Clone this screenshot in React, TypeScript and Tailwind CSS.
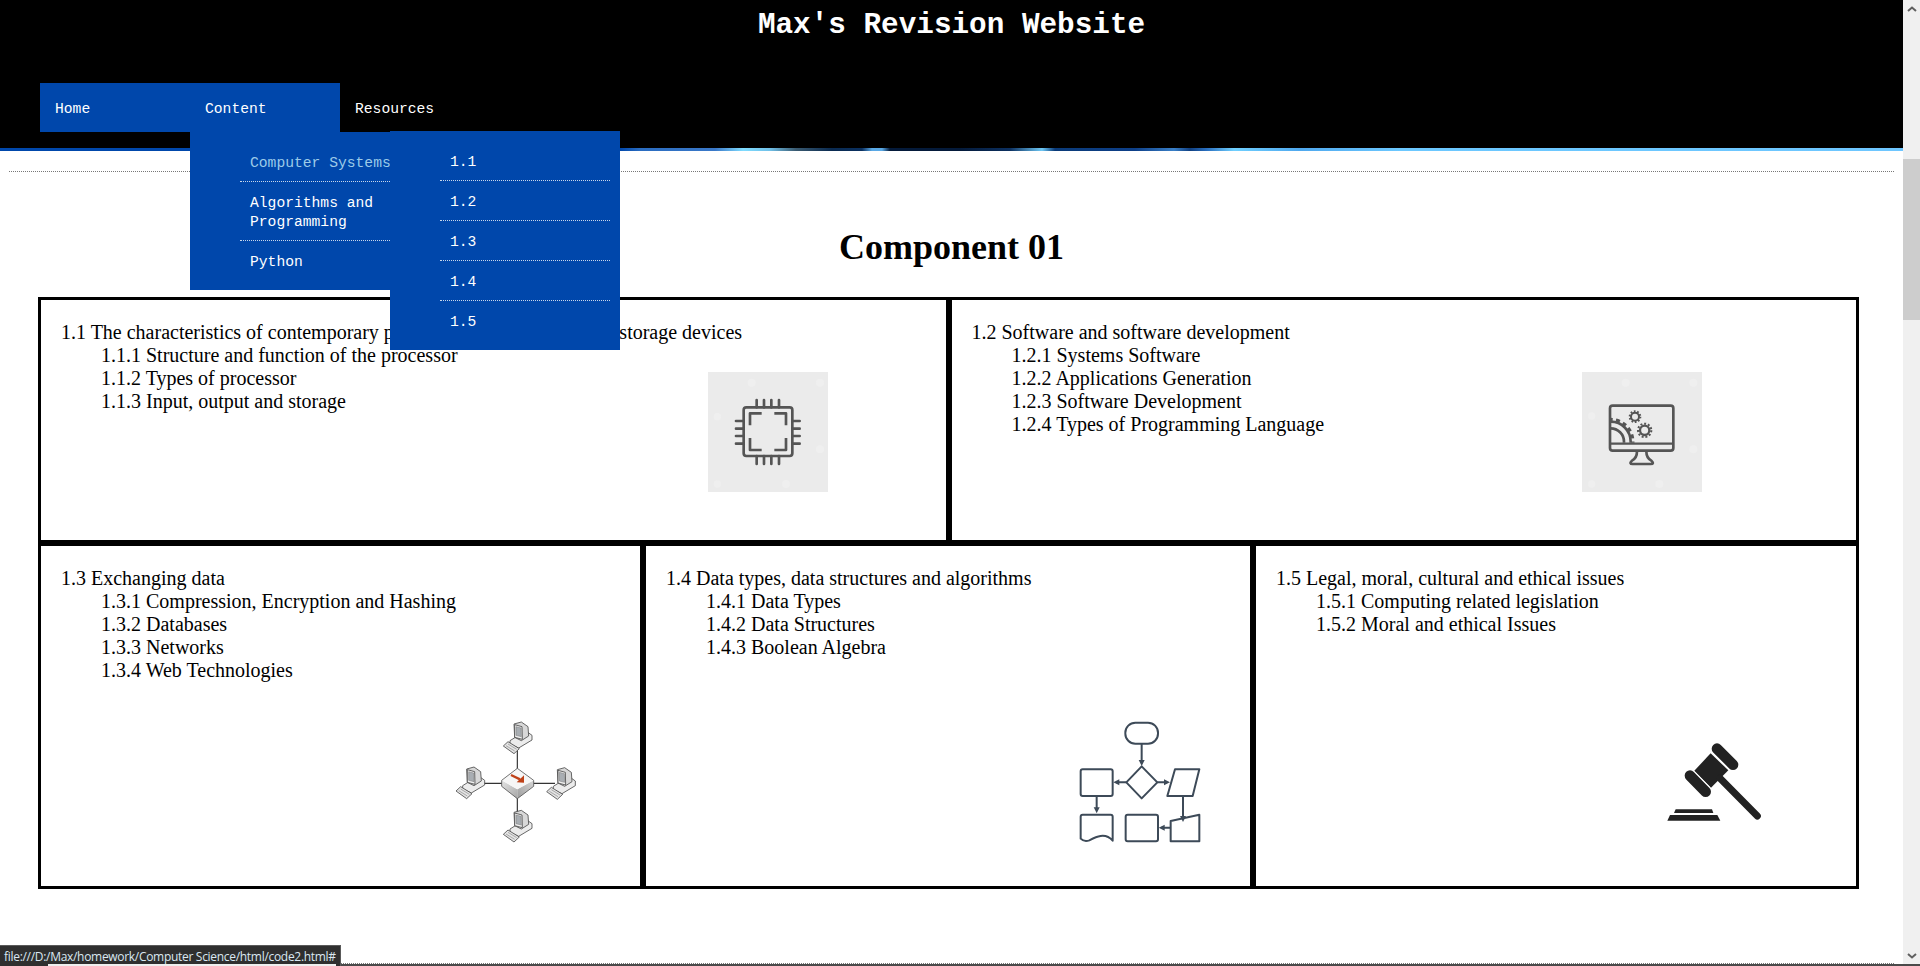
import React from "react";

const mono = "font-['Liberation_Mono',monospace] text-[14.67px] leading-[19px]";

function Chip() {
  return (
    <svg viewBox="0 0 540 450" className="col-start-1 row-start-1 justify-self-end self-start w-[180px] h-[150px] mt-[50px] mr-[86px]">
      <rect x="84" y="66" width="360" height="360" fill="#ebebeb" />
      <g fill="#efefef">
        <circle cx="215" cy="98" r="12" /><circle cx="420" cy="98" r="12" /><circle cx="112" cy="200" r="11" /><circle cx="420" cy="298" r="12" /><circle cx="112" cy="402" r="11" /><circle cx="318" cy="402" r="12" />
      </g>
      <g fill="none" stroke="#555" strokeWidth="8" strokeLinecap="round" strokeLinejoin="round">
        <rect x="191" y="172" width="146" height="146" rx="8" />
        <path d="M245 190H210V226M283 190H318V226M210 264V300H245M318 264V300H283" strokeLinecap="butt" />
        <path d="M230 150V172M252 150V172M274 150V172M297 150V172M230 318V342M252 318V342M274 318V342M297 318V342M168 213H191M168 236H191M168 258H191M168 281H191M337 213H359M337 236H359M337 258H359M337 281H359" />
      </g>
    </svg>
  );
}

function Monitor() {
  return (
    <svg viewBox="0 0 540 450" className="col-start-1 row-start-1 justify-self-end self-start w-[180px] h-[150px] mt-[50px] mr-[116px]">
      <defs>
        <clipPath id="scr"><rect x="150" y="170" width="190" height="108" /></clipPath>
      </defs>
      <rect x="66" y="66" width="360" height="360" fill="#ebebeb" />
      <g fill="#efefef">
        <circle cx="197" cy="98" r="12" /><circle cx="400" cy="98" r="12" /><circle cx="95" cy="198" r="11" /><circle cx="400" cy="298" r="12" /><circle cx="95" cy="402" r="11" /><circle cx="298" cy="402" r="12" />
      </g>
      <g fill="none" stroke="#555" strokeLinejoin="round">
        <rect x="150" y="167" width="190" height="135" rx="8" strokeWidth="8" />
        <path d="M150 281H340" strokeWidth="7" />
        <path d="M231 304C231 318 226 327 216 332Q206 342 218 342H272Q284 342 274 332C264 327 259 318 259 304" strokeWidth="8" />
        <g clipPath="url(#scr)">
          <circle cx="152" cy="275" r="40" strokeWidth="8" />
          <circle cx="152" cy="275" r="60" strokeWidth="8" />
          <circle cx="152" cy="275" r="67" strokeWidth="9" strokeDasharray="12 10" />
        </g>
        <circle cx="225" cy="200" r="12" strokeWidth="6" />
        <circle cx="225" cy="200" r="16" strokeWidth="6" strokeDasharray="5 5" />
        <circle cx="254" cy="241" r="14" strokeWidth="7" />
        <circle cx="254" cy="241" r="20" strokeWidth="6" strokeDasharray="6 5.5" />
      </g>
    </svg>
  );
}

function Pc({ x, y }: { x: number; y: number }) {
  return (
    <g transform={`translate(${x} ${y})`} stroke="#4a4a4a" strokeWidth="2.5" strokeLinejoin="round">
      <polygon points="210,122 226,112 262,96 276,106 276,120 236,144 210,132" fill="#ececec" />
      <polygon points="222,72 244,66 264,80 266,108 244,122 224,112" fill="#d8d8d8" />
      <polygon points="224,74 246,80 247,118 224,112" fill="#efefef" />
      <polygon points="228,80 243,84 244,110 228,106" fill="#a9aeb3" stroke="#777" strokeWidth="1.5" />
      <polygon points="190,138 204,125 238,146 222,161" fill="#e4e4e4" />
      <path d="M198 137L224 153M204 132L230 148" stroke="#8a8a8a" strokeWidth="2" />
    </g>
  );
}

function Network() {
  return (
    <svg viewBox="0 0 480 480" className="col-start-1 row-start-1 justify-self-end self-start w-[160px] h-[160px] mt-[154px] mr-[40px]">
      <defs>
        <linearGradient id="swl" x1="0" y1="0" x2="1" y2="1">
          <stop offset="0" stopColor="#e4e4e4" />
          <stop offset="1" stopColor="#a8a8a8" />
        </linearGradient>
        <linearGradient id="swr" x1="1" y1="0" x2="0" y2="1">
          <stop offset="0" stopColor="#d6d6d6" />
          <stop offset="1" stopColor="#9c9c9c" />
        </linearGradient>
      </defs>
      <path d="M232 150V210M132 250H186M280 250H345M232 294V338" stroke="#333" strokeWidth="3.5" />
      <Pc x={0} y={0} />
      <Pc x={-142} y={135} />
      <Pc x={130} y={137} />
      <Pc x={0} y={265} />
      <polygon points="185,241 232,268 232,296 185,259" fill="url(#swl)" />
      <polygon points="281,241 232,268 232,296 281,259" fill="url(#swr)" />
      <polygon points="232,205 281,241 232,268 185,241" fill="#f6f6f6" />
      <polygon points="232,205 281,241 281,259 232,296 185,259 185,241" fill="none" stroke="#555" strokeWidth="2.5" strokeLinejoin="round" />
      <path d="M213 225L240 238" stroke="#bf4118" strokeWidth="7" />
      <polygon points="252,226 252,248 230,247" fill="#bf4118" />
    </svg>
  );
}

function Flow() {
  return (
    <svg viewBox="0 0 480 480" className="col-start-1 row-start-1 justify-self-end self-start w-[160px] h-[160px] mt-[154px] mr-[30px]">
      <g fill="none" stroke="#3d4a58" strokeWidth="6" strokeLinejoin="round">
        <rect x="196" y="68" width="98" height="63" rx="30" />
        <polygon points="245,199 292,247 245,295 199,247" />
        <rect x="62" y="208" width="96" height="80" rx="6" />
        <polygon points="345,208 418,208 398,288 322,288" />
        <polygon points="332,363 418,344 418,424 332,424" />
        <rect x="197" y="344" width="97" height="80" rx="6" />
        <path d="M62 350Q62 344 68 344H152Q158 344 158 350V422C135 395 105 412 88 421C76 426 68 422 62 416Z" />
        <path d="M245 131V190M199 247H168M292 247H320M110 288V330M369 288V358M332 383H304" />
      </g>
      <g fill="#3d4a58">
        <polygon points="236,180 254,180 245,198" />
        <polygon points="178,238 178,256 160,247" />
        <polygon points="312,238 312,256 330,247" />
        <polygon points="101,322 119,322 110,340" />
        <polygon points="360,348 378,348 369,366" />
        <polygon points="314,374 314,392 296,383" />
      </g>
    </svg>
  );
}

function Gavel() {
  return (
    <svg viewBox="0 0 480 360" className="col-start-1 row-start-1 justify-self-end self-start w-[160px] h-[120px] mt-[174px] mr-[56px]">
      <g fill="#222">
        <polygon points="107,268 216,268 220,279 102,279" />
        <polygon points="90,285 232,285 241,302 82,302" />
        <polygon points="212,100 265,151 213,203 163,152" />
      </g>
      <g stroke="#222" strokeLinecap="round">
        <path d="M240 175L352 288" strokeWidth="21" />
        <path d="M231 86L279 134" strokeWidth="32" />
        <path d="M150 167L197 215" strokeWidth="32" />
      </g>
      <path d="M218 99L266 147M163 154L210 202" stroke="#fff" strokeWidth="2.5" />
    </svg>
  );
}

function Box({ title, items, children }: { title: string; items: string[]; children: React.ReactNode }) {
  return (
    <section className="border-[3px] border-black grid grid-cols-1 grid-rows-1 min-w-0">
      <div className="col-start-1 row-start-1 pt-[21px] pl-[20px]">
        <p className="whitespace-nowrap">{title}</p>
        <ul className="pl-[40px]">
          {items.map((t) => (
            <li key={t} className="whitespace-nowrap">{t}</li>
          ))}
        </ul>
      </div>
      {children}
    </section>
  );
}

function DropItem({ children, last, className = "" }: { children: React.ReactNode; last?: boolean; className?: string }) {
  return (
    <li className={`px-[10px] pt-[12px] pb-[8px] ${last ? "" : "border-b border-dotted border-[#c9d6ea]"} ${className}`}>{children}</li>
  );
}

export default function App() {
  return (
    <div className="relative flex h-[966px] overflow-hidden bg-white text-black font-['Liberation_Serif',serif] text-[20px] leading-[23px]">
      <main className="flex-1 min-w-0">
        <header className="h-[148px] bg-black text-white">
          <h1 className="h-[46px] pt-[3px] text-center font-['Liberation_Mono',monospace] text-[29.33px] leading-[46px] font-bold">Max's Revision Website</h1>
          <nav className={`mt-[37px] ml-[40px] ${mono}`}>
            <ul className="flex h-[49px]">
              <li className="w-[150px] bg-[#0047ab] pl-[15px] pt-[17px]">Home</li>
              <li className="relative z-20 w-[150px] bg-[#0047ab] pl-[15px] pt-[17px]">
                Content
                <div className="absolute left-0 top-[49px] w-[200px] h-[158px] bg-[#0047ab] pl-[50px] pt-[10px]">
                  <ul>
                    <DropItem className="text-[#9ccbe8] whitespace-nowrap">Computer Systems</DropItem>
                    <DropItem>Algorithms and Programming</DropItem>
                    <DropItem last>Python</DropItem>
                  </ul>
                  <div className="absolute left-[200px] top-[-1px] w-[230px] h-[219px] bg-[#0047ab] pl-[50px] pr-[10px] pt-[10px]">
                    <ul>
                      <DropItem>1.1</DropItem>
                      <DropItem>1.2</DropItem>
                      <DropItem>1.3</DropItem>
                      <DropItem>1.4</DropItem>
                      <DropItem last>1.5</DropItem>
                    </ul>
                  </div>
                </div>
              </li>
              <li className="w-[150px] pl-[15px] pt-[17px]">Resources</li>
            </ul>
          </nav>
        </header>
        <div className="h-[3px] bg-[linear-gradient(90deg,#0047ab_0,#0047ab_620px,#2a6cc0_640px,#3a78c8_715px,#7fdcff_743px,#70c0e8_770px,#3a5a70_796px,#0a2a50_832px,#0a3060_862px,#5aa9e6_872px,#5aa9e6_882px,#041a3a_890px,#041a3a_960px,#0c3060_1010px,#6ec8f5_1042px,#0a3a78_1055px,#0d3f88_1135px,#3a80c8_1174px,#103f80_1190px,#2a70c0_1207px,#70d0ff_1234px,#4fa8ee_1300px,#6cc8ff_1400px,#6ec6ff_1903px)]" />
        <hr className="mt-[20px] mx-[9px] border-0 border-t border-dotted border-[#777]" />
        <h2 className="mt-[55px] text-center text-[36px] leading-[41px] font-bold">Component 01</h2>
        <div className="mt-[29px] ml-[38px] w-[1821px]">
          <div className="grid grid-cols-2 h-[246px]">
            <Box
              title="1.1 The characteristics of contemporary processors, input, output and storage devices"
              items={["1.1.1 Structure and function of the processor", "1.1.2 Types of processor", "1.1.3 Input, output and storage"]}
            >
              <Chip />
            </Box>
            <Box
              title="1.2 Software and software development"
              items={["1.2.1 Systems Software", "1.2.2 Applications Generation", "1.2.3 Software Development", "1.2.4 Types of Programming Language"]}
            >
              <Monitor />
            </Box>
          </div>
          <div className="grid grid-cols-[605px_610px_606px] h-[346px]">
            <Box
              title="1.3 Exchanging data"
              items={["1.3.1 Compression, Encryption and Hashing", "1.3.2 Databases", "1.3.3 Networks", "1.3.4 Web Technologies"]}
            >
              <Network />
            </Box>
            <Box
              title="1.4 Data types, data structures and algorithms"
              items={["1.4.1 Data Types", "1.4.2 Data Structures", "1.4.3 Boolean Algebra"]}
            >
              <Flow />
            </Box>
            <Box
              title="1.5 Legal, moral, cultural and ethical issues"
              items={["1.5.1 Computing related legislation", "1.5.2 Moral and ethical Issues"]}
            >
              <Gavel />
            </Box>
          </div>
        </div>
        <hr className="mt-[74px] mx-[9px] border-0 border-t border-dotted border-[#777]" />
      </main>
      <aside className="w-[17px] h-full bg-[#f0f0f0] flex flex-col">
        <div className="h-[17px] flex items-center justify-center">
          <svg viewBox="0 0 10 6" className="w-[10px] h-[6px]"><path d="M1 5L5 1.5L9 5" fill="none" stroke="#606060" strokeWidth="2" /></svg>
        </div>
        <div className="mt-[142px] h-[161px] bg-[#cdcdcd]" />
        <div className="flex-1" />
        <div className="h-[19px] pb-[2px] flex items-center justify-center">
          <svg viewBox="0 0 10 6" className="w-[10px] h-[6px]"><path d="M1 1L5 4.5L9 1" fill="none" stroke="#606060" strokeWidth="2" /></svg>
        </div>
      </aside>
      <div className="absolute left-0 right-0 bottom-0 h-[2px] bg-[#4a4a4a]" />
      <div className="absolute left-0 bottom-0 w-[341px] h-[21px] bg-[#2f2f2f] border-t border-r border-[#5a5a5a] pl-[4px] pt-[1px] font-['Open_Sans',sans-serif] text-[12px] leading-[20px] text-[#dbe8f2] whitespace-nowrap overflow-hidden tracking-[-0.3px]">
        file:///D:/Max/homework/Computer Science/html/code2.html#
        <div className="absolute left-[48px] bottom-0 w-[288px] h-[2px] bg-[#efefef]" />
      </div>
    </div>
  );
}
